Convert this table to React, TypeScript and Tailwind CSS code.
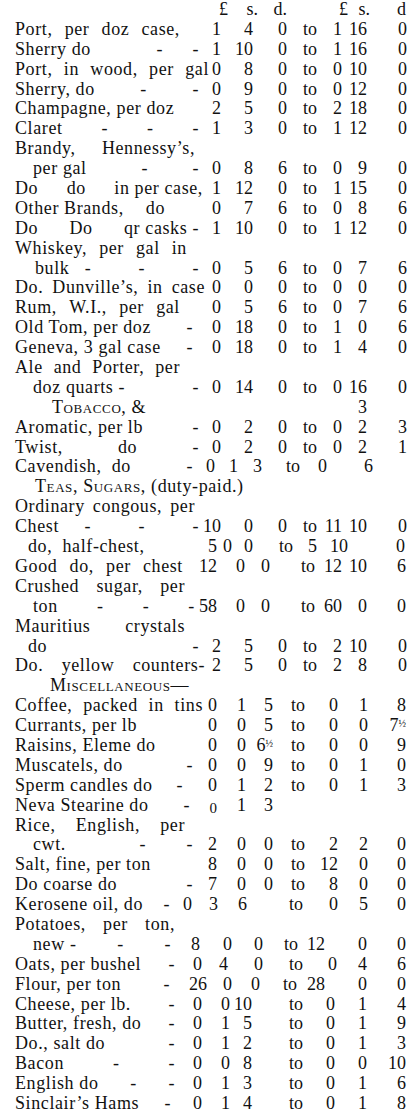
import type { ReactNode } from "react";
import clsx from "clsx";

// grid columns per line: label, £, s, d, to, £, s, d (numbers right-aligned)
const T0 = "grid-cols-[198px_15px_30px_29px_30px_31px_22px_36px]";
const T1 = "grid-cols-[184px_22px_32px_34px_30px_25px_25px_40px]";
const T3 = "grid-cols-[180px_22px_28px_25px_45px_27px_25px_39px]";
const T5 = "grid-cols-[178px_24px_29px_27px_32px_33px_30px_38px]";
const TK = "grid-cols-[155px_22px_26px_29px_56px_35px_30px_38px]";
const TN = "grid-cols-[156px_29px_32px_31px_35px_27px_42px_39px]";
const TO = "grid-cols-[160px_27px_26px_35px_40px_34px_30px_39px]";
const TF = "grid-cols-[155px_37px_25px_28px_37px_28px_42px_39px]";
const T6 = "grid-cols-[160px_27px_28px_22px_51px_32px_32px_39px]";
const TC = "grid-cols-[178px_22px_23px_24px_38px_27px_20px_26px]";
const TH = "grid-cols-[185px_17px_15px_21px_40px_24px_31px_57px]";

type Row = {
  g: string;
  l?: string[];
  lc?: string;
  f?: string;
  node?: ReactNode;
  n?: string[];
};

const sc = "[font-variant-caps:small-caps]";

const rows: Row[] = [
  { g: T0, l: [], n: ["£", "s.", "d.", "", "£", "s.", "d"] },
  { g: T1, l: ["Port,", "per", "doz", "case,"], lc: "w-[165px]", n: ["1", "4", "0", "to", "1", "16", "0"] },
  { g: T1, l: ["Sherry do", "-", "-"], f: "min-w-[112px]", n: ["1", "10", "0", "to", "1", "16", "0"] },
  { g: T1, l: ["Port,", "in", "wood,", "per", "gal"], lc: "w-[194px]", n: ["0", "8", "0", "to", "0", "10", "0"] },
  { g: T1, l: ["Sherry, do", "-", "-"], f: "min-w-[78px]", n: ["0", "9", "0", "to", "0", "12", "0"] },
  { g: T1, l: ["Champagne, per doz"], n: ["2", "5", "0", "to", "2", "18", "0"] },
  { g: T1, l: ["Claret", "-", "-", "-"], n: ["1", "3", "0", "to", "1", "12", "0"] },
  { g: T1, l: ["Brandy,", "Hennessy’s,"], lc: "w-[180px]" },
  { g: T1, l: ["per gal", "-", "-"], lc: "pl-[18px]", f: "min-w-[64px]", n: ["0", "8", "6", "to", "0", "9", "0"] },
  { g: T1, l: ["Do", "do", "in per case,"], lc: "w-[188px]", n: ["1", "12", "0", "to", "1", "15", "0"] },
  { g: T1, l: ["Other Brands,", "do"], lc: "w-[150px]", n: ["0", "7", "6", "to", "0", "8", "6"] },
  { g: T1, l: ["Do", "Do", "qr casks -"], n: ["1", "10", "0", "to", "1", "12", "0"] },
  { g: T1, l: ["Whiskey,", "per", "gal", "in"], lc: "w-[172px]" },
  { g: T1, l: ["bulk   -", "-", "-"], lc: "pl-[20px]", n: ["0", "5", "6", "to", "0", "7", "6"] },
  { g: T1, l: ["Do.", "Dunville’s,", "in", "case"], lc: "w-[190px]", n: ["0", "0", "0", "to", "0", "0", "0"] },
  { g: T1, l: ["Rum,", "W.I.,", "per", "gal"], lc: "w-[165px]", n: ["0", "5", "6", "to", "0", "7", "6"] },
  { g: T1, l: ["Old Tom, per doz", "-"], lc: "w-[178px]", n: ["0", "18", "0", "to", "1", "0", "6"] },
  { g: T1, l: ["Geneva, 3 gal case", "-"], lc: "w-[178px]", n: ["0", "18", "0", "to", "1", "4", "0"] },
  { g: T1, l: ["Ale", "and", "Porter,", "per"], lc: "w-[165px]" },
  { g: T1, l: ["doz quarts -", "-"], lc: "pl-[18px]", n: ["0", "14", "0", "to", "0", "16", "0"] },
  {
    g: T1,
    node: <span className={clsx("pl-[37px]", sc)}>Tobacco, &amp;</span>,
    n: ["", "", "", "", "", "3", ""],
  },
  { g: T1, l: ["Aromatic, per lb", "-"], n: ["0", "2", "0", "to", "0", "2", "3"] },
  { g: T1, l: ["Twist,", "do", "-"], n: ["0", "2", "0", "to", "0", "2", "1"] },
  { g: TC, l: ["Cavendish,  do", "-"], n: ["0", "1", "3", "to", "0", "", "6"] },
  {
    g: T1,
    node: (
      <span className="pl-[20px]">
        <span className={sc}>Teas, Sugars,</span> (duty-paid.)
      </span>
    ),
  },
  { g: T1, l: ["Ordinary", "congous,", "per"], lc: "w-[180px]" },
  { g: T1, l: ["Chest     -", "-", "-"], n: ["10", "0", "0", "to", "11", "10", "0"] },
  { g: TH, l: ["do,  half-chest,"], lc: "pl-[13px]", n: ["5", "0", "0", "to", "5", "10", "0"] },
  { g: T3, l: ["Good", "do,", "per", "chest"], lc: "w-[168px]", n: ["12", "0", "0", "to", "12", "10", "6"] },
  { g: T3, l: ["Crushed", "sugar,", "per"], lc: "w-[170px]" },
  { g: T3, l: ["ton", "-", "-", "-"], lc: "pl-[18px]", n: ["58", "0", "0", "to", "60", "0", "0"] },
  { g: T3, l: ["Mauritius", "crystals"], lc: "w-[170px]" },
  { g: T1, l: ["do", "-"], lc: "pl-[13px]", n: ["2", "5", "0", "to", "2", "10", "0"] },
  { g: T1, l: ["Do.", "yellow", "counters-"], lc: "w-[190px]", n: ["2", "5", "0", "to", "2", "8", "0"] },
  { g: T5, node: <span className={clsx("pl-[35px]", sc)}>Miscellaneous—</span> },
  { g: T5, l: ["Coffee,", "packed", "in", "tins"], lc: "w-[188px]", n: ["0", "1", "5", "to", "0", "1", "8"] },
  { g: T5, l: ["Currants, per lb"], n: ["0", "0", "5", "to", "0", "0", "7½"] },
  { g: T5, l: ["Raisins, Eleme do"], n: ["0", "0", "6½", "to", "0", "0", "9"] },
  { g: T5, l: ["Muscatels, do", "-"], n: ["0", "0", "9", "to", "0", "1", "0"] },
  { g: T5, l: ["Sperm candles do", "-"], lc: "w-[168px]", n: ["0", "1", "2", "to", "0", "1", "3"] },
  { g: T5, l: ["Neva Stearine do", "-"], lc: "w-[175px]", n: ["0_", "1", "3", "", "", "", ""] },
  { g: T5, l: ["Rice,", "English,", "per"], lc: "w-[170px]" },
  { g: T5, l: ["cwt.", "-", "-"], lc: "pl-[18px]", f: "min-w-[66px]", n: ["2", "0", "0", "to", "2", "2", "0"] },
  { g: T5, l: ["Salt, fine, per ton"], n: ["8", "0", "0", "to", "12", "0", "0"] },
  { g: T5, l: ["Do coarse do", "-"], n: ["7", "0", "0", "to", "8", "0", "0"] },
  { g: TK, l: ["Kerosene oil, do", "-"], n: ["0", "3", "6", "to", "0", "5", "0"] },
  { g: TK, l: ["Potatoes,", "per", "ton,"], lc: "w-[160px]" },
  { g: TN, l: ["new -", "-", "-"], lc: "pl-[18px]", n: ["8", "0", "0", "to", "12", "0", "0"] },
  { g: TO, l: ["Oats, per bushel", "-"], n: ["0", "4", "0", "to", "0", "4", "6"] },
  { g: TF, l: ["Flour, per ton", "-"], n: ["26", "0", "0", "to", "28", "0", "0"] },
  { g: T6, l: ["Cheese, per lb.", "-"], n: ["0", "0", "10", "to", "0", "1", "4"] },
  { g: T6, l: ["Butter, fresh, do", "-"], n: ["0", "1", "5", "to", "0", "1", "9"] },
  { g: T6, l: ["Do., salt do", "-"], n: ["0", "1", "2", "to", "0", "1", "3"] },
  { g: T6, l: ["Bacon", "-", "-"], n: ["0", "0", "8", "to", "0", "0", "10"] },
  { g: T6, l: ["English do", "-", "-"], n: ["0", "1", "3", "to", "0", "1", "6"] },
  { g: T6, l: ["Sinclair’s Hams", "-"], lc: "w-[156px]", n: ["0", "1", "4", "to", "0", "1", "8"] },
];

function Num({ v }: { v: string }) {
  if (v === "0_") return <span className="translate-y-[3px] text-[15px]">0</span>;
  if (v.endsWith("½"))
    return (
      <span>
        {v.slice(0, -1)}
        <span className="align-[4px] text-[10px] leading-none">½</span>
      </span>
    );
  return <span>{v}</span>;
}

function Line({ row }: { row: Row }) {
  const label = row.node ?? (
    <div className={clsx("flex justify-between", row.lc)}>
      {row.l?.map((p, i) => (
        <span key={i} className={i === 0 ? row.f : undefined}>
          {p}
        </span>
      ))}
    </div>
  );

  return (
    <div className={clsx("grid h-[19.9px] pl-[15px]", row.g)}>
      <div className={clsx("whitespace-pre tracking-[0.6px]", !row.n && "col-span-8")}>{label}</div>
      {row.n?.map((v, i) => (
        <div key={i} className="flex justify-end whitespace-nowrap">
          {v && <Num v={v} />}
        </div>
      ))}
    </div>
  );
}

export default function App() {
  return (
    <div className="h-[1115px] w-[408px] overflow-hidden bg-white text-[18px] leading-[19.9px] text-[#111] [font-family:'Liberation_Serif','Times_New_Roman',serif]">
      {rows.map((row, i) => (
        <Line key={i} row={row} />
      ))}
    </div>
  );
}
